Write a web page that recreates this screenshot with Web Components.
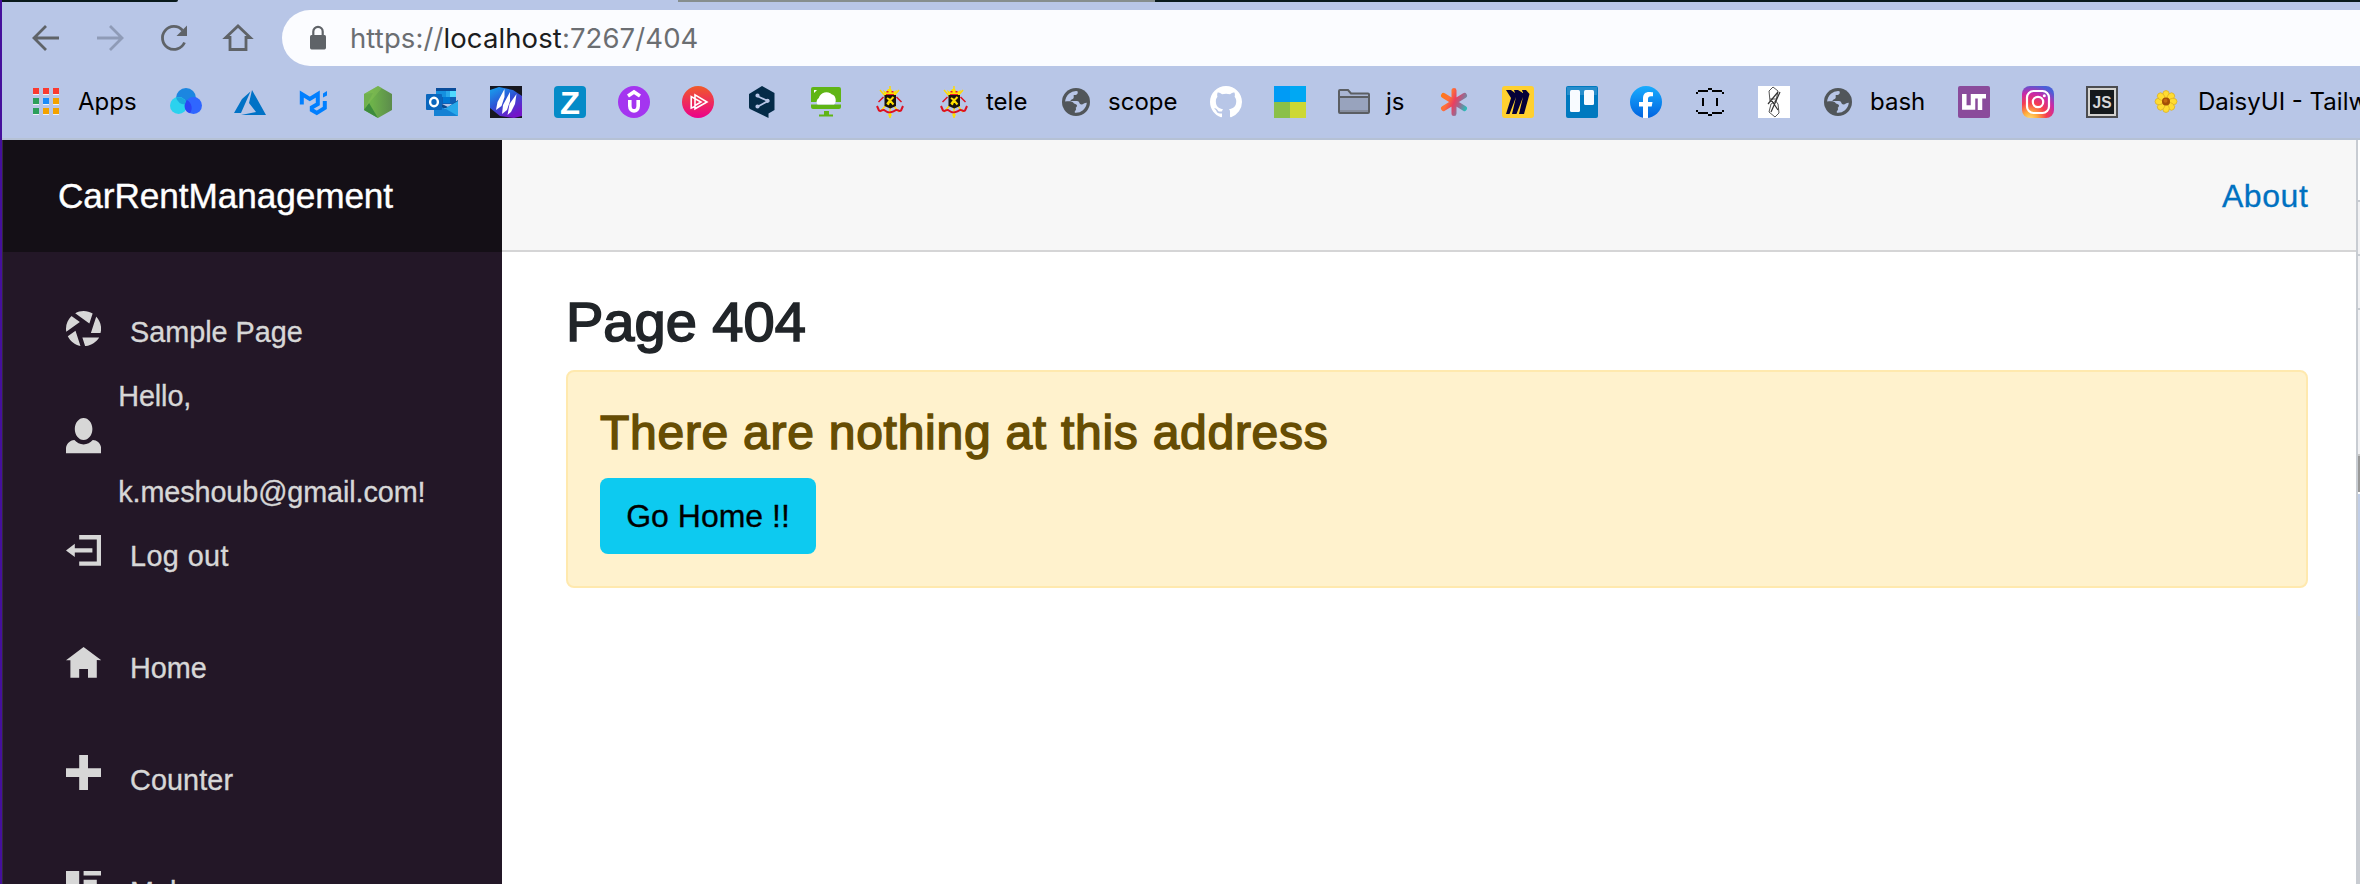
<!DOCTYPE html>
<html lang="en">
<head>
<meta charset="utf-8">
<title>CarRentManagement</title>
<style>
html,body{margin:0;height:884px;overflow:hidden;background:#fff}
body{font-family:"Liberation Sans",Arial,sans-serif}
</style>
</head>
<body>
<browser-window></browser-window>
<script>
const ICONS = {
apps:`<g fill="#f0f2f6"><path d="M3 6h6v2H3zM13 6h6v2h-6zM23 6h6v2h-6zM3 16h6v2H3zM13 16h6v2h-6zM23 16h6v2h-6zM3 26h6v2H3zM13 26h6v2h-6zM23 26h6v2h-6z" transform="translate(0 1)"/></g><path fill="#fa3a31" d="M3 2h6v6H3zM13 2h6v6h-6zM23 2h6v6h-6z"/><path fill="#2c9f5b" d="M3 12h6v6H3zM3 22h6v6H3z"/><path fill="#1a8cfa" d="M13 12h6v6h-6z"/><path fill="#f3a200" d="M23 12h6v6h-6zM13 22h6v6h-6zM23 22h6v6h-6z"/>`,
blob:`<circle cx="16" cy="12" r="10" fill="#1c86e0"/><circle cx="8.500" cy="19.500" r="8.500" fill="#2bd2ee"/><circle cx="23.500" cy="19.500" r="8.500" fill="#2f66ff"/><path d="M16 15.500a8.500 8.500 0 0 0 0 8A8.500 8.500 0 0 0 16 15.500z" fill="#2b44f5"/><path fill="#2b44f5" d="M17 14c5 3 6 9 3 13.300-6-1.500-7-9-3-13.300z"/><path d="M6 11.400a10 10 0 0 1 10 4 9 9 0 0 0-1 3A10 10 0 0 1 6 11.400z" fill="#1aa6dd"/>`,
azure:`<path fill="#0072c6" d="M16.500 5.500L8 13 0 27h7zM18 4l14 25H7l15-3-7-9z"/>`,
mui:`<g fill="none" stroke="#007fff" stroke-width="4"><path d="M3.800 18.500V8l8 5 8-5v10l-6 3.500v2.500l5 3 8-5V15"/></g><path fill="#007fff" d="M25 7.500l4-2.500v4.500l-4 2z"/>`,
node:`<defs><linearGradient id="n" x1="0" x2="1"><stop offset=".3" stop-color="#6db24a"/><stop offset="1" stop-color="#5c8c4c"/></linearGradient></defs><path fill="url(#n)" d="M16 0l14 8v16l-14 8-14-8V8z"/><path fill="#3f873f" d="M2 8l9-1-9 17z" opacity=".35"/><path fill="#3d8b3c" d="M2 24l5-7 9 15z"/><path fill="#88c057" d="M2 8L16 0l4 2L2 23z" opacity=".45"/>`,
outlook:`<path fill="#0a4d9b" d="M10 2h20v8H10z"/><path fill="#1490df" d="M10 5h10v10H10z"/><path fill="#28a8ea" d="M20 5h10v6H20z"/><path fill="#50d9ff" d="M24 5h6v6h-6z"/><path fill="#0f5fb5" d="M10 11h20v7H10z"/><path fill="#0078d4" d="M17 11h7v6h-7z"/><path fill="#0c4b8f" d="M10 15l12 6 10-7v8H10z"/><path fill="#1685d9" d="M8 30V18l24 12z"/><path fill="#28a8ea" d="M20 22l12-7v15H8z"/><path fill="#1481d4" d="M8 30V18l12 5 12 7z"/><rect y="8" width="16" height="16" rx="1" fill="#0a66bd"/><ellipse cx="8" cy="16" rx="3.900" ry="4.200" fill="none" stroke="#fff" stroke-width="2.400"/>`,
wing:`<defs><linearGradient id="w" x1="0" y1="0" x2=".6" y2="1"><stop offset="0" stop-color="#16a6ef"/><stop offset=".5" stop-color="#2c55d5"/><stop offset="1" stop-color="#7315c9"/></linearGradient></defs><path fill="#17171f" d="M0 0h32v32H0z"/><path fill="url(#w)" d="M0 4L9 1l14 3 9 6v20l-8 2-14-2L0 22z"/><path fill="#fff" d="M14.500 3v8l-3 9-5.500 4 1.500-8zM20 6v9l-3 9-5 4 1-9zM26.500 8l-1.500 10-4 8-3.500 3 2-11z"/>`,
zed:`<rect width="32" height="32" rx="4" fill="#058bc8"/><text x="16" y="27.500" text-anchor="middle" font-family="Liberation Sans" font-weight="700" font-size="31" fill="#fff" textLength="20" lengthAdjust="spacingAndGlyphs">Z</text>`,
udemy:`<circle cx="16" cy="16" r="16" fill="#a435f0"/><path d="M10 10l6-4 6 4M11.800 14v6c0 6.500 8.400 6.500 8.400 0v-6" fill="none" stroke="#fff" stroke-width="3.600"/>`,
play:`<defs><linearGradient id="p" x1="0" y1="0" x2="0" y2="1"><stop offset="0" stop-color="#f05a28"/><stop offset="1" stop-color="#ec008c"/></linearGradient></defs><circle cx="16" cy="16" r="16" fill="url(#p)"/><g fill="none" stroke="#fff" stroke-width="1.600"><path d="M13 8.800v14L25 16zM13 20.500L9.200 22V10.500L19 16l-6 3.500"/></g>`,
deepl:`<path fill="#042b48" d="M16 0l12.500 7v17l-6 3.500V32L5 23.500C3.500 23 3 22 3 21V8z"/><g stroke="#b8c6e7" stroke-width="1.800" fill="#b8c6e7"><path fill="none" d="M11 10l11 5-11 6"/><circle cx="11.500" cy="9.500" r="1.200"/><circle cx="21.500" cy="14.800" r="1.200"/><circle cx="11.500" cy="20.500" r="1.200"/></g>`,
monitor:`<path fill="#60b515" d="M3 1h26a2 2 0 0 1 2 2v13H1V3a2 2 0 0 1 2-2zM1 18.500h30V21a2 2 0 0 1-2 2H3a2 2 0 0 1-2-2zM14 25h5v3.500h4v2H9v-2h5z"/><path fill="#fff" d="M7.500 18.500a4.500 4.500 0 0 1 1.300-6.500A8 8 0 0 1 22 8.500c4 .5 5 8 2 10zM4 4h3L4 7z"/>`,
crest:`<g stroke="#ffd900" stroke-width="1.400" fill="none"><path d="M6 4l19 22M25 4L6 26M16 0v32"/></g><path fill="#fce205" d="M9 4l3 2 2-3h3l2 3 4-2-2 6H11z"/><path fill="#e51b2a" d="M12.500 5h2v1.500h-2zM17.500 5h2v1.500h-2zM12 8h8v1h-8z"/><g fill="none" stroke="#dc1022" stroke-width="1.500"><path d="M9.500 11l-5 5M22.500 11l5 5"/><path d="M3 20l2 4.500c2 1.500 3-1 5-.5 2 1.500 4 3 6 2.500s4-1 6-2.500c2-.5 3 2 5 .5l2-4.500" stroke-width="2"/></g><path fill="#18120d" d="M10.500 9h11.500v11l-5.700 2.500-5.800-2.500z"/><path fill="none" stroke="#ffe100" stroke-width="2" d="M13 12l3 2-3 4M19.500 11l-3.500 3.500 3.500 4M16 14l-2 5"/><circle cx="16" cy="29" r="1.700" fill="#ffe100"/>`,
globe:`<circle cx="16" cy="16" r="14" fill="#51565a"/><path fill="#b8c6e7" d="M17.500 5.200c1 3-1 3.800-3.800 3.800v2.500c0 2-3 1.500-3.200 3.500h6.500c2.800 0 2 3.500 4.500 3.500 2 0 2.700-1.800 5.300-1.700A11 11 0 0 1 15 26.800c-1-2 1.500-2 1-4.300-.5-1.800-3.500-.8-4.500-2.500-1-2-3-3.500-6.300-4A11 11 0 0 1 17.500 5.200z"/><path fill="#51565a" d="M9.500 12.500h8c3 0 2.500 3.500 5 3.500l-2 4H8.500c-1.500-3-.8-5 1-7.500z" opacity="0"/><path fill="#51565a" d="M5 15.500c5-.3 7-.5 9 2 2 .5 3 1 3 2.500-1 3-5 2.500-5 6.500l-6-5z"/>`,
github:`<path fill="#fff" fill-rule="evenodd" transform="scale(2)" d="M8 0C3.580 0 0 3.580 0 8c0 3.540 2.290 6.530 5.470 7.590.4.070.55-.17.55-.38 0-.19-.01-.82-.01-1.490-2.010.37-2.530-.49-2.690-.94-.09-.23-.48-.94-.82-1.130-.28-.15-.68-.52-.01-.53.63-.01 1.080.58 1.230.82.72 1.210 1.870.87 2.330.66.07-.52.28-.87.51-1.070-1.780-.2-3.640-.89-3.640-3.950 0-.87.31-1.590.82-2.150-.08-.2-.36-1.020.08-2.120 0 0 .67-.21 2.200.82.64-.18 1.320-.27 2-.27s1.360.09 2 .27c1.530-1.040 2.200-.82 2.200-.82.44 1.100.16 1.920.08 2.120.51.56.82 1.270.82 2.150 0 3.070-1.870 3.750-3.650 3.950.29.25.54.73.54 1.480 0 1.070-.01 1.930-.01 2.200 0 .21.15.46.55.38A8.010 8.010 0 0 0 16 8c0-4.420-3.580-8-8-8z"/>`,
tiles:`<path fill="#009bf5" d="M0 0h16v16H0z"/><path fill="#00a8f3" d="M16 0h16v16H16z"/><path fill="#8bc048" d="M0 16h16v16H0z"/><path fill="#cdd833" d="M16 16h16v16H16z"/>`,
folder:`<path fill="#a9b5d2" d="M1 5q0-1 1-1h8l4 3.500h16q1 0 1 1V26q0 1-1 1H2q-1 0-1-1z"/><path fill="#98a3bd" d="M2 11h28v15H2z"/><path fill="#868d9e" d="M2 24h28v2.500H2z"/><path fill="none" stroke="#5b5e63" stroke-width="2" d="M1 5q0-1 1-1h8l3 3.500h17q1 0 1 1V26q0 1-1 1H2q-1 0-1-1zM1 11h30"/>`,
star:`<defs><linearGradient id="s" gradientUnits="userSpaceOnUse" x1="3" y1="10" x2="29" y2="22"><stop offset="0" stop-color="#ff7a18"/><stop offset=".28" stop-color="#ff7038"/><stop offset=".5" stop-color="#e93f60"/><stop offset=".72" stop-color="#9b6990"/><stop offset="1" stop-color="#22c2bb"/></linearGradient></defs><path stroke="url(#s)" stroke-width="5" stroke-linecap="round" d="M16 4.500l.01 23M5.500 9.500l21 13M26.500 9.500l-21 13"/>`,
miro:`<rect width="32" height="32" rx="3" fill="#ffd02f"/><path fill="#050038" d="M4 4h5l4 3-1-3h4l5 3-1-3h4l3.500 4-5.500 20h-5l4-17-6.500 17h-4.500l4-17-6.500 17H4l5-16z"/>`,
trello:`<rect width="32" height="32" rx="2" fill="#0079bf"/><path fill="#278dcb" d="M1 1h30v8H1z"/><rect x="4" y="4" width="10" height="22" rx="1.500" fill="#f8fbff"/><rect x="18" y="4" width="10" height="15" rx="1.500" fill="#f8fbff"/>`,
facebook:`<defs><linearGradient id="f" x1="0" y1="0" x2="0" y2="1"><stop offset="0" stop-color="#18acfe"/><stop offset="1" stop-color="#0163e0"/></linearGradient></defs><circle cx="16" cy="16" r="16" fill="url(#f)"/><path fill="#fff" d="M13 32V20.500H9V16h4v-3.500C13 8 15.500 6 19 6c2 0 4 .300 4 .300v4h-2c-2.200 0-3 1.200-3 2.700v3h4.500l-.8 4.500H18V32z"/>`,
bot:`<path fill="none" stroke="#000" stroke-width="2" d="M2 7h2M4 5h10M14 3h4M18 5h10M28 7h2M2 25h2M4 27h10M14 29h4M18 27h10M28 25h2M9 12v8M23 12v8"/>`,
sketch:`<path fill="#fff" d="M0 0h32v32H0z"/><g fill="none" stroke="#555" stroke-width="1"><path d="M15 1l-4 4 1 10 3 1M15 1l5 4-2 10-5 3-2 8 6 5 4-4-1-9-3-4M12 13h6"/><path stroke="#333" stroke-width="1.200" d="M22 6l-9 20M20 6L10 18M14 15l6 9"/></g>`,
ut:`<rect width="32" height="32" rx="2" fill="#8a4b9b"/><path fill="none" stroke="#fff" stroke-width="4.500" d="M6.300 8v13.500H15V8M15 10.300h13M22 9v15"/>`,
insta:`<defs><radialGradient id="i" cx=".25" cy="1.050" r="1.100"><stop offset="0" stop-color="#ffe07a"/><stop offset=".22" stop-color="#ffac3c"/><stop offset=".48" stop-color="#f53d50"/><stop offset=".75" stop-color="#c929a8"/><stop offset="1" stop-color="#4a5fd8"/></radialGradient></defs><rect width="32" height="32" rx="8" fill="url(#i)"/><g fill="none" stroke="#fff" stroke-width="2.200"><rect x="5" y="5" width="22" height="22" rx="6.500"/><circle cx="16" cy="16" r="5.200"/></g><circle cx="22.300" cy="9.700" r="1.500" fill="#fff"/>`,
jsbox:`<path fill="#4b4c50" d="M0 0h32v32H0z"/><path fill="#15191c" stroke="#d3d2cf" stroke-width="2" d="M3 3h26v26H3z"/><text x="16" y="21.500" text-anchor="middle" font-family="Liberation Sans" font-weight="700" font-size="17" fill="#d8d8d8" textLength="19" lengthAdjust="spacingAndGlyphs">JS</text>`,
daisy:`<g fill="#ffdc31" stroke="#d9ab24" stroke-width=".7"><ellipse cx="16" cy="8.500" rx="3.300" ry="4"/><ellipse cx="16" cy="8.500" rx="3.300" ry="4" transform="rotate(45 16 15.500)"/><ellipse cx="16" cy="8.500" rx="3.300" ry="4" transform="rotate(90 16 15.500)"/><ellipse cx="16" cy="8.500" rx="3.300" ry="4" transform="rotate(135 16 15.500)"/><ellipse cx="16" cy="8.500" rx="3.300" ry="4" transform="rotate(180 16 15.500)"/><ellipse cx="16" cy="8.500" rx="3.300" ry="4" transform="rotate(225 16 15.500)"/><ellipse cx="16" cy="8.500" rx="3.300" ry="4" transform="rotate(270 16 15.500)"/><ellipse cx="16" cy="8.500" rx="3.300" ry="4" transform="rotate(315 16 15.500)"/></g><circle cx="16" cy="15.500" r="4" fill="#a34e06"/><circle cx="15.500" cy="14.800" r="2" fill="#c56a10"/>`,
back:`<path fill="none" stroke="#5f6368" stroke-width="2.800" d="M29 16H5M16 4L4 16l12 12"/>`,
forward:`<path fill="none" stroke="#8f9bb7" stroke-width="2.800" d="M3 16h24M16 4l12 12-12 12"/>`,
reload:`<path fill="none" stroke="#5f6368" stroke-width="2.800" d="M26.500 20.500A11.500 11.500 0 1 1 24.500 8.200"/><path fill="#5f6368" d="M29 3.500v10.500H18.500z"/>`,
house:`<path fill="none" stroke="#5f6368" stroke-width="2.800" stroke-linejoin="miter" d="M3.800 15.500H8V27.500h16V15.500h4.200L16 4z"/>`,
lock:`<path fill="#5f6368" d="M9.500 13h13q1.500 0 1.500 1.500v11q0 2-1.500 2h-13q-1.500 0-1.500-2v-11q0-1.500 1.500-1.500z"/><path fill="none" stroke="#5f6368" stroke-width="2.200" d="M11.300 14v-4.500a4.700 4.700 0 0 1 9.400 0V14"/>`
};
const NAV = {
aperture:"M4 0c-.69 0-1.34.19-1.91.5l3.22 2.34.75-2.25c-.6-.36-1.31-.59-2.06-.59zm-2.75 1.13c-.76.73-1.25 1.74-1.25 2.88 0 .25.02.48.06.72l3.09-2.22-1.91-1.38zm5.63.13l-1.22 3.75h2.19c.08-.32.13-.65.13-1 0-1.07-.44-2.03-1.13-2.75zm-4.72 3.22l-1.75 1.25c.55 1.13 1.6 1.99 2.88 2.22l-1.13-3.47zm1.56 1.53l.63 1.97c1.33-.12 2.48-.88 3.19-1.97h-3.81z",
person:"M4 0c-1.1 0-2 1.12-2 2.5s.9 2.5 2 2.5 2-1.12 2-2.5-.9-2.5-2-2.5zm-2.09 5c-1.06.05-1.91.92-1.91 2v1h8v-1c0-1.08-.84-1.95-1.91-2-.54.61-1.28 1-2.09 1-.81 0-1.55-.39-2.09-1z",
logout:"M3 0v1h4v5h-4v1h5v-7h-5zm-1 2l-2 1.5 2 1.5v-1h4v-1h-4v-1z",
home:"M4 0l-4 3h1v4h2v-2h2v2h2v-4.030l1 .03-4-3z",
plus:"M3 0v3h-3v2h3v3h2v-3h3v-2h-3v-3h-2z",
list:"M0 0v3h3v-3h-3zm4 0v1h4v-1h-4zm0 2v1h3v-1h-3zm-4 2v3h3v-3h-3zm4 0v1h4v-1h-4zm0 2v1h3v-1h-3z"
};
function define(name, render){
  customElements.define(name, class extends HTMLElement{
    connectedCallback(){
      if(this.shadowRoot) return;
      this.attachShadow({mode:"open"}).innerHTML = render(this);
    }
  });
}
define("ui-icon", el => `<style>:host{display:block;width:32px;height:32px;flex:none}svg{display:block}</style>
<svg width="32" height="32" viewBox="0 0 32 32">${ICONS[el.getAttribute("name")]}</svg>`);

define("nav-glyph", el => `<style>:host{display:block;width:35.2px;height:35.2px;flex:none}svg{display:block}</style>
<svg width="35.200" height="35.200" viewBox="0 0 8 8" fill="#d7d7d7"><path d="${NAV[el.getAttribute("name")]}"/></svg>`);

define("bookmark-item", el => `<style>:host{display:flex;align-items:center;flex:none;height:32px;white-space:nowrap}
span{margin-left:16px;font:24px/32px Inter,"Open Sans",sans-serif;color:#000}</style>
<ui-icon name="${el.getAttribute("icon")}"></ui-icon>${el.hasAttribute("labelled") ? "<span><slot></slot></span>" : ""}`);

define("address-bar", () => `<style>:host{display:flex;flex:1;align-items:center;height:56px;box-sizing:border-box;padding-left:20px;border-radius:28px 0 0 28px;background:#fbfcff;gap:16px}
span{font:27.500px/40px Inter,sans-serif;letter-spacing:.1px;color:#6b6e72;white-space:nowrap}b{font-weight:400;color:#1c1d20}</style>
<ui-icon name="lock"></ui-icon><span>https://<b>localhost</b>:7267/404</span>`);

define("browser-chrome", () => {
  const only = s => s.split(" ").map(n=>`<bookmark-item icon="${n}"></bookmark-item>`).join("");
  return `<style>:host{display:flex;flex-direction:column;height:140px;box-sizing:border-box;border-bottom:2px solid #b5c1d5;background:#b8c6e7;overflow:hidden}
.tabs{display:flex;height:2px;flex:none}.tabs i:nth-child(1){width:176px;background:#09191b;border-radius:0 0 3px 0}.tabs i:nth-child(2){margin-left:500px;width:477px;background:#868e8e}.tabs i:nth-child(3){flex:1;background:#09191b}
.bar{display:flex;align-items:center;height:56px;margin-top:8px;padding-left:28px}
.tools{display:flex;gap:32px;width:252px}
.marks{display:flex;gap:32px;margin-top:20px;padding-left:28px}
</style>
<div class="tabs"><i></i><i></i><i></i></div>
<div class="bar"><div class="tools"><ui-icon name="back"></ui-icon><ui-icon name="forward"></ui-icon><ui-icon name="reload"></ui-icon><ui-icon name="house"></ui-icon></div><address-bar></address-bar></div>
<div class="marks"><bookmark-item labelled icon="apps" style="width:108px">Apps</bookmark-item>${only("blob azure mui node outlook wing zed udemy play deepl monitor crest")}<bookmark-item labelled icon="crest" style="width:90px">tele</bookmark-item><bookmark-item labelled icon="globe" style="width:118px">scope</bookmark-item>${only("github tiles")}<bookmark-item labelled icon="folder" style="width:68px">js</bookmark-item>${only("star miro trello facebook bot sketch")}<bookmark-item labelled icon="globe" style="width:104px">bash</bookmark-item>${only("ut insta jsbox")}<bookmark-item labelled icon="daisy">DaisyUI - Tailwind</bookmark-item></div>`;
});

define("nav-item", el => `<style>:host{display:flex;align-items:center;height:88px;margin-bottom:24px;flex:none;gap:28.800px;font-size:28.8px;line-height:40px;letter-spacing:var(--ls,0);color:#d7d7d7;-webkit-text-stroke:.35px #d7d7d7}
nav-glyph{margin-bottom:var(--lift,7px)}</style><nav-glyph name="${el.getAttribute("icon")}"></nav-glyph><span><slot></slot></span>`);

define("user-greeting", () => `<style>:host{display:flex;align-items:center;gap:17px;height:136px;font-size:28.8px;line-height:40px;color:#d7d7d7;letter-spacing:-.1px;-webkit-text-stroke:.35px #d7d7d7}
nav-glyph{margin-bottom:16px}.t{display:flex;flex-direction:column;gap:56px}</style>
<nav-glyph name="person"></nav-glyph><div class="t"><slot name="hello"></slot><slot name="mail"></slot></div>`);

define("side-bar", () => `<style>:host{display:block;width:499px;flex:none;background:#231727;overflow:hidden}
header{height:112px;background:#140f16;color:#fff;font-size:35.2px;line-height:112px;padding-left:55px;letter-spacing:-.08px;box-sizing:border-box;-webkit-text-stroke:.4px #fff}
nav{display:flex;flex-direction:column;padding:36px 0 0 63px}</style>
<header>CarRentManagement</header>
<nav><nav-item icon="aperture" style="margin-bottom:0">Sample Page</nav-item>
<user-greeting><span slot="hello">Hello,</span><span slot="mail">k.meshoub@gmail.com!</span></user-greeting>
<nav-item icon="logout" style="--ls:.4px">Log out</nav-item><nav-item icon="home">Home</nav-item><nav-item icon="plus" style="--lift:15px;--ls:.1px">Counter</nav-item><nav-item icon="list">Makes</nav-item></nav>`);

define("alert-box", () => `<style>:host{display:block;box-sizing:border-box;height:218px;padding:32px;border:2px solid #ffe9ae;border-radius:8px;background:#fff2cd;color:#664d03}
h2{margin:0;font-size:48px;font-weight:400;line-height:58px;height:74px;-webkit-text-stroke:1.5px #664d03;letter-spacing:.73px}
button{display:block;width:216px;height:76px;border:0;border-radius:8px;padding:0;background:#0dcaf0;color:#000;font:32px/48px "Liberation Sans",Arial,sans-serif;-webkit-text-stroke:.3px #000}</style>
<h2><slot></slot></h2><button>Go Home !!</button>`);

define("main-page", () => `<style>:host{display:block;flex:1;background:#fff}
header{display:flex;justify-content:flex-end;height:112px;box-sizing:border-box;border-bottom:2px solid #d5d5d6;background:#f7f7f7;padding-right:47.500px;font-size:32px;line-height:113px;color:#0071c1;letter-spacing:.6px;-webkit-text-stroke:.3px #0071c1}
main{padding:37px 48px 0 64px}
h1{margin:0;height:81px;font-size:56px;font-weight:400;line-height:66px;color:#212529;-webkit-text-stroke:1.700px #212529}</style>
<header><span>About</span></header><main><h1>Page 404</h1><alert-box>There are nothing at this address</alert-box></main>`);

define("edge-strip", () => `<style>:host{display:block;width:2px;flex:none;border-left:2px solid #c8ccd2;background:linear-gradient(#fff 60px,#c8ccd2 60px 62px,#f2f2f4 62px 114px,#c8ccd2 114px 116px,#f2f2f4 116px 168px,#c8ccd2 168px 170px,#f2f2f4 170px 314px,#c8c8c8 314px 316px,#999 316px 352px,#fff 352px 354px,#c0cde6 354px 476px,#cacdd2 476px)}</style>`);

define("browser-window", () => `<style>:host{display:flex;flex-direction:column;height:884px;box-sizing:border-box;border-left:2px solid #45109c;overflow:hidden}
.page{display:flex;flex:1;min-height:0;border-left:1px solid #342b3a}</style>
<browser-chrome></browser-chrome><div class="page"><side-bar></side-bar><main-page></main-page><edge-strip></edge-strip></div>`);
</script>
</body>
</html>
